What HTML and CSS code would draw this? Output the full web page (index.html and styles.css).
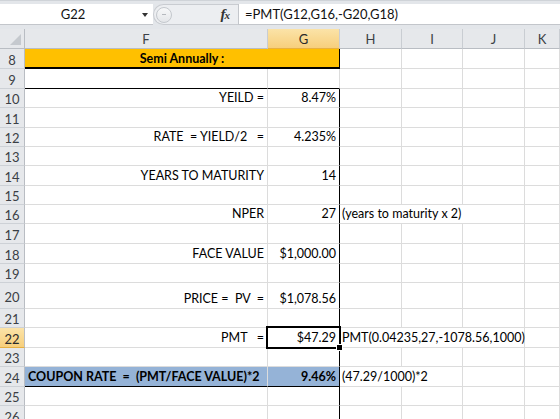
FILE: index.html
```html
<html>
  <head>
    <meta charset="UTF-8" />
    <title>Bond coupon rate</title>
    <link rel="stylesheet" href="styles.css">
  </head>
  <body>
    <div class="formula-bar">
      <div class="name-box">
        <span class="name">G22</span>
        <span class="caret"></span>
      </div>
      <div class="grip">
        <span class="knob"><span class="dash"></span></span>
        <span class="fx"><i>f</i><i class="x">x</i></span>
      </div>
      <div class="formula">=PMT(G12,G16,-G20,G18)</div>
    </div>

    <div class="sheet">
      <!-- column headers -->
      <div class="corner"><span class="tri"></span></div>
      <div class="col-head">F</div>
      <div class="col-head active">G</div>
      <div class="col-head">H</div>
      <div class="col-head">I</div>
      <div class="col-head">J</div>
      <div class="col-head">K</div>

      <!-- 8 -->
      <div class="row-head">8</div>
      <div class="cell gold title span-fg">Semi Annually :</div>
      <div class="cell"></div><div class="cell"></div><div class="cell"></div><div class="cell"></div>

      <!-- 9 -->
      <div class="row-head">9</div>
      <div class="cell edge-bottom"></div>
      <div class="cell edge-bottom"></div>
      <div class="cell"></div><div class="cell"></div><div class="cell"></div><div class="cell"></div>

      <!-- 10 -->
      <div class="row-head">10</div>
      <div class="cell label">YEILD =</div>
      <div class="cell value edge-right">8.47%</div>
      <div class="cell"></div><div class="cell"></div><div class="cell"></div><div class="cell"></div>

      <!-- 11 -->
      <div class="row-head">11</div>
      <div class="cell"></div>
      <div class="cell edge-right"></div>
      <div class="cell"></div><div class="cell"></div><div class="cell"></div><div class="cell"></div>

      <!-- 12 -->
      <div class="row-head">12</div>
      <div class="cell label">RATE  = YIELD/2   =</div>
      <div class="cell value edge-right">4.235%</div>
      <div class="cell"></div><div class="cell"></div><div class="cell"></div><div class="cell"></div>

      <!-- 13 -->
      <div class="row-head">13</div>
      <div class="cell"></div>
      <div class="cell edge-right"></div>
      <div class="cell"></div><div class="cell"></div><div class="cell"></div><div class="cell"></div>

      <!-- 14 -->
      <div class="row-head">14</div>
      <div class="cell label">YEARS TO MATURITY</div>
      <div class="cell value edge-right">14</div>
      <div class="cell"></div><div class="cell"></div><div class="cell"></div><div class="cell"></div>

      <!-- 15 -->
      <div class="row-head">15</div>
      <div class="cell"></div>
      <div class="cell edge-right"></div>
      <div class="cell"></div><div class="cell"></div><div class="cell"></div><div class="cell"></div>

      <!-- 16 -->
      <div class="row-head">16</div>
      <div class="cell label">NPER</div>
      <div class="cell value edge-right">27</div>
      <div class="cell note span-3">(years to maturity x 2)</div>
      <div class="cell"></div>

      <!-- 17 -->
      <div class="row-head">17</div>
      <div class="cell"></div>
      <div class="cell edge-right"></div>
      <div class="cell"></div><div class="cell"></div><div class="cell"></div><div class="cell"></div>

      <!-- 18 -->
      <div class="row-head">18</div>
      <div class="cell label">FACE VALUE</div>
      <div class="cell value edge-right">$1,000.00</div>
      <div class="cell"></div><div class="cell"></div><div class="cell"></div><div class="cell"></div>

      <!-- 19 -->
      <div class="row-head">19</div>
      <div class="cell"></div>
      <div class="cell edge-right"></div>
      <div class="cell"></div><div class="cell"></div><div class="cell"></div><div class="cell"></div>

      <!-- 20 -->
      <div class="row-head">20</div>
      <div class="cell label">PRICE =  PV  =</div>
      <div class="cell value edge-right">$1,078.56</div>
      <div class="cell"></div><div class="cell"></div><div class="cell"></div><div class="cell"></div>

      <!-- 21 -->
      <div class="row-head">21</div>
      <div class="cell"></div>
      <div class="cell edge-right"></div>
      <div class="cell"></div><div class="cell"></div><div class="cell"></div><div class="cell"></div>

      <!-- 22 -->
      <div class="row-head active">22</div>
      <div class="cell label">PMT   =</div>
      <div class="cell value edge-right selected">$47.29</div>
      <div class="cell note span-3">PMT(0.04235,27,-1078.56,1000)</div>
      <div class="cell"></div>

      <!-- 23 -->
      <div class="row-head">23</div>
      <div class="cell"></div>
      <div class="cell edge-right"></div>
      <div class="cell"></div><div class="cell"></div><div class="cell"></div><div class="cell"></div>

      <!-- 24 -->
      <div class="row-head">24</div>
      <div class="cell blue bold edge-bottom">COUPON RATE  =  (PMT/FACE VALUE)*2</div>
      <div class="cell blue bold value edge-right edge-bottom">9.46%</div>
      <div class="cell note span-2">(47.29/1000)*2</div>
      <div class="cell"></div><div class="cell"></div>

      <!-- 25 -->
      <div class="row-head">25</div>
      <div class="cell"></div>
      <div class="cell edge-right"></div>
      <div class="cell"></div><div class="cell"></div><div class="cell"></div><div class="cell"></div>

      <!-- 26 -->
      <div class="row-head">26</div>
      <div class="cell"></div>
      <div class="cell edge-right"></div>
      <div class="cell"></div><div class="cell"></div><div class="cell"></div><div class="cell"></div>
    </div>
  </body>
</html>
```

FILE: styles.css
```css
body {
  margin: 0;
  background-color: #fff;
  font-family: Lato, "Open Sans", sans-serif;
  font-size: 12.5px;
  color: #000;
  overflow: hidden;
}

.formula-bar {
  display: flex;
  flex-direction: row;
  height: 29px;
  box-sizing: border-box;
  padding-top: 3px;
  padding-bottom: 4px;
  background-color: #e3e6ea;
  border-top: 1px solid #cfd3d8;
}

.name-box {
  width: 153px;
  display: flex;
  flex-direction: row;
  align-items: center;
  background-color: #fff;
  border-bottom: 1px solid #c3c6cb;
}

.name {
  flex: 1;
  text-align: center;
  font-size: 13px;
  color: #111;
  padding-left: 4px;
}

.caret {
  width: 0;
  height: 0;
  border-left: 3px solid transparent;
  border-right: 3px solid transparent;
  border-top: 4px solid #333;
  margin-right: 5px;
  margin-top: 2px;
}

.grip {
  width: 85px;
  display: flex;
  flex-direction: row;
  align-items: center;
  justify-content: space-between;
  background-color: #eceef1;
  border-radius: 11px 0 0 11px;
  border: 1px solid #c9ccd1;
  border-right: none;
  box-sizing: border-box;
}

.knob {
  width: 16px;
  height: 16px;
  border-radius: 50%;
  margin-left: 2px;
  background: linear-gradient(#f7f8f9, #e4e6e9);
  border: 1px solid #c4c8cd;
  box-sizing: border-box;
  display: flex;
  align-items: center;
  justify-content: center;
}

.dash {
  width: 4px;
  height: 1px;
  background-color: #b5b9be;
}

.fx {
  font-family: "Liberation Serif", serif;
  font-size: 15px;
  color: #333;
  margin-right: 8px;
  font-weight: bold;
}

.fx .x {
  font-size: 11px;
  margin-left: -1px;
}

.formula {
  flex: 1;
  background-color: #fff;
  border-left: 1px solid #c3c6cb;
  border-bottom: 1px solid #c3c6cb;
  padding-left: 6px;
  display: flex;
  align-items: center;
  font-size: 13px;
  color: #111;
}

.sheet {
  display: grid;
  grid-template-columns: 25px 243px 72px 62px 61px 62px 1fr;
  grid-template-rows: 20px 20px 20px 19px 20px 19px 19px 20px 19px 19px 20px 20px 19px 26px 19px 20px 19px 20px 19px 20px;
}

.corner,
.col-head,
.row-head {
  background-color: #e6e8eb;
  color: #3b3f45;
  font-size: 13px;
  box-sizing: border-box;
  display: flex;
  align-items: center;
  justify-content: center;
}

.corner {
  border-right: 1px solid #b9bdc3;
  border-bottom: 1px solid #b9bdc3;
  align-items: flex-end;
  justify-content: flex-end;
  padding: 0 3px 3px 0;
}

.tri {
  width: 0;
  height: 0;
  border-left: 11px solid transparent;
  border-bottom: 11px solid #c5c9ce;
}

.col-head {
  border-right: 1px solid #c9cdd2;
  border-bottom: 1px solid #b9bdc3;
}

.row-head {
  border-right: 1px solid #b9bdc3;
  border-bottom: 1px solid #cdd1d6;
  padding-top: 2px;
}

.col-head.active,
.row-head.active {
  background: linear-gradient(#fbe3a8, #f7cf7c);
  border-bottom-color: #e7b042;
  color: #2a2a2a;
}

.cell {
  box-sizing: border-box;
  border-right: 1px solid #dcdcdc;
  border-bottom: 1px solid #dcdcdc;
  display: flex;
  align-items: flex-end;
  padding: 0 3px 2px 3px;
  white-space: pre;
  overflow: visible;
}

.span-fg {
  grid-column: span 2;
}

.span-2 {
  grid-column: span 2;
}

.span-3 {
  grid-column: span 3;
}

.title {
  justify-content: center;
  font-weight: bold;
  border-right: 1px solid #000;
  border-bottom: 2px solid #000;
  padding-bottom: 1px;
}

.gold {
  background-color: #ffc000;
}

.blue {
  background-color: #95b3d7;
}

.bold {
  font-weight: bold;
}

.label,
.value {
  justify-content: flex-end;
}

.value {
  padding-right: 3px;
}

.note {
  padding-left: 2px;
}

.edge-right {
  border-right: 1px solid #000;
}

.edge-bottom {
  border-bottom: 1px solid #000;
}

.selected {
  position: relative;
}

.selected::after {
  content: "";
  position: absolute;
  left: -2px;
  top: -2px;
  right: -2px;
  bottom: -2px;
  border: 2px solid #000;
}

.selected::before {
  content: "";
  position: absolute;
  right: -4px;
  bottom: -4px;
  width: 5px;
  height: 5px;
  background-color: #000;
  border: 1px solid #fff;
  z-index: 1;
}
```
